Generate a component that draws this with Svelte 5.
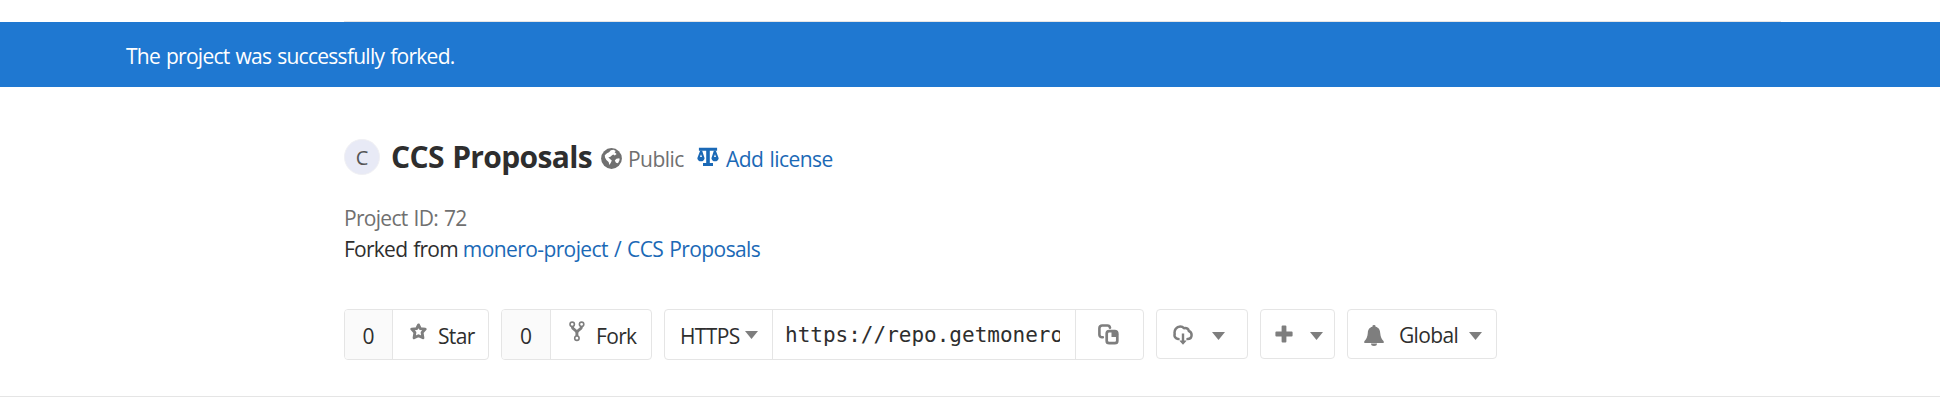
<script>
  const caret = "M0 0h12.6L6.3 7z";
</script>

{#snippet down()}
  <svg class="caret" width="13" height="8" viewBox="0 0 12.6 7" preserveAspectRatio="none"><path d={caret} /></svg>
{/snippet}

<div class="page">
  <div class="top"><div class="rule"></div></div>
  <div class="flash"><span class="t t-flash">The project was successfully forked.</span></div>
  <main>
    <div class="title">
      <div class="avatar">C</div>
      <h1 class="t">CCS Proposals</h1>
      <svg class="globe" width="21" height="21" viewBox="0 0 21 21"><circle cx="10.5" cy="10.5" r="10.4" /><path fill="#fff" d="M9.800 2.200 12.500 1.800 14.800 2.900 13.600 4.200 15.600 6 13.800 7.400 12.200 6.400 10.800 7.600 9 9 7.300 9.300 9 11 10.800 12.400 9.800 14.800 8.400 17 7.600 14 5.400 12 4 9.400 3.800 7.200 6 5.200 8 4.200zM15.400 10.800 18.400 10.200 18.600 12 17 15.200 15 14.800 13.800 12.600z" /></svg>
      <span class="t public">Public</span>
      <svg class="scale" width="22" height="20" viewBox="0 0 22 20"><path d="M1.900.8h18.200v3H12.800V16H16v2.900H6V16h3.200V3.800H1.900z" /><path d="M3.200 3.500h1.900L7.600 11.200a3.700 3.700 0 0 1-7.300 0zM16.900 3.500h1.900l2.900 7.700a3.700 3.700 0 0 1-7.300 0z" /><path fill="#fff" d="M4 7.300 5 10H3zM18 7.300l1 2.700h-2z" /></svg>
      <a class="t license" href="#license">Add license</a>
    </div>
    <div class="meta">
      <div><span class="t pid">Project ID: 72</span></div>
      <div><span class="t from">Forked from</span><a class="t source" href="#source">monero-project / CCS Proposals</a></div>
    </div>
    <div class="actions">
      <div class="box star">
        <span class="count">0</span>
        <span class="act"><svg width="17" height="17" viewBox="0 0 17 17"><path fill="none" stroke="#7e7e7e" stroke-width="2.9" stroke-linejoin="round" d="M8.500 1.900l1.800 3.700 4.900.5-3.100 3.400.8 5.300-4.400-2-4.400 2 .8-5.300-3.100-3.400 4.900-.5z" /></svg><span class="t">Star</span></span>
      </div>
      <div class="box fork">
        <span class="count">0</span>
        <span class="act"><svg width="16" height="21" viewBox="0 0 16 21"><g fill="none" stroke="#7e7e7e"><path stroke-width="2.9" d="M3.200 5.400c0 4 4.700 2.600 4.700 6.500V15M12.600 5.400c0 4-4.700 2.600-4.700 6.500" /><circle cx="3.2" cy="3.3" r="2.200" stroke-width="1.600" /><circle cx="12.600" cy="3.300" r="2.200" stroke-width="1.600" /><circle cx="7.900" cy="17.200" r="2.200" stroke-width="1.600" /></g></svg><span class="t">Fork</span></span>
      </div>
      <div class="box clone">
        <span class="proto"><span class="t">HTTPS</span>{@render down()}</span>
        <span class="url"><span class="clip">https://repo.getmonero</span></span>
        <span class="copy"><svg width="21" height="21" viewBox="0 0 21 21"><path fill="none" stroke="#7e7e7e" stroke-width="2.600" stroke-linecap="round" d="M4.800 13.300H4a2.600 2.600 0 0 1-2.600-2.600V4.200A2.700 2.700 0 0 1 4.100 1.500h5.100A2.700 2.700 0 0 1 12 3.800" /><rect x="8.700" y="7.200" width="10.600" height="12" rx="2.500" fill="none" stroke="#7e7e7e" stroke-width="2.700" /><path d="M13.500 7h3l3.500 3.400V13h-6.500z" /></svg></span>
      </div>
      <div class="box download"><svg width="20" height="20" viewBox="0 0 20 20"><path fill="none" stroke="#7e7e7e" stroke-width="2.500" stroke-linecap="round" stroke-linejoin="round" d="M5.500 14H5A3.800 3.800 0 0 1 1.700 9C.9 5 3.500 1.400 7.200 1.400c2 0 3 .8 3.800 1.800 3-.5 4.500.8 4.800 2.800 1.700.6 2.800 2 2.800 4 0 2.300-1.500 4-4.100 4" /><path d="M8.800 8.500h2.400v7h2.600L10 19.800l-3.800-4.300h2.600z" /></svg>{@render down()}</div>
      <div class="box plus"><svg width="18" height="18" viewBox="0 0 18 18"><path d="M7.600.4h2.800q1 0 1 1v5.200h5.200q1 0 1 1v2.800q0 1-1 1h-5.200v5.200q0 1-1 1H7.600q-1 0-1-1v-5.200H1.400q-1 0-1-1V7.600q0-1 1-1h5.200V1.400q0-1 1-1z" /></svg>{@render down()}</div>
      <div class="box global"><svg width="20" height="21" viewBox="0 0 20 21"><path d="M10 0a1.500 1.500 0 0 1 1.500 1.800C15 2.600 16 5 16.200 8c.3 4.300 1.600 6.300 3.500 8.200V18H.3v-1.800C2.200 14.300 3.500 12.300 3.800 8 4 5 5 2.600 8.500 1.800A1.500 1.500 0 0 1 10 0zM7 18.500h6a3 2.500 0 0 1-6 0z" /></svg><span class="t">Global</span>{@render down()}</div>
    </div>
  </main>
  <div class="bottom"></div>
</div>

<style>
  :global(body) { margin: 0; background: #fff; }
  .page { height: 400px; overflow: hidden; font: 21px/31px "Open Sans", "Noto Sans", sans-serif; color: #2e2e2e; display: flex; flex-direction: column; }
  .top { height: 22px; display: flex; align-items: flex-end; padding-left: 344px; }
  .rule { height: 1px; width: 1437px; background: #e5e5e5; }
  .flash { height: 65px; box-sizing: border-box; padding: 19px 0 0 126px; background: #1f78d1; color: #fff; line-height: 30px; }
  .t { white-space: nowrap; letter-spacing: -.65px; word-spacing: 1.2px; }
  .t-flash { letter-spacing: -.73px; }
  main { padding: 51px 0 0 344px; height: 309px; box-sizing: border-box; }
  .title { display: flex; height: 40px; }
  .avatar { width: 36px; height: 36px; margin-top: 1px; box-sizing: border-box; border: 1px solid #f0f0f4; border-radius: 50%; background: #e8eaf6; color: #555; font-size: 20px; line-height: 35px; text-align: center; }
  h1 { margin: 0 0 0 11px; width: 198px; font-size: 30px; line-height: 38px; font-weight: 700; letter-spacing: -1.4px; word-spacing: 2px; }
  svg { fill: #7e7e7e; flex: none; display: block; }
  .globe { margin: 10px 0 0 12px; fill: #707070; }
  .public { margin: 6px 0 0 6px; width: 57px; color: #707070; letter-spacing: -.55px; }
  .scale { margin: 9px 0 0 12px; fill: #1b69b6; }
  .license { margin: 6px 0 0 7px; letter-spacing: -.55px; }
  a { color: #1b69b6; text-decoration: none; }
  .meta { margin-top: 25px; }
  .pid { color: #707070; letter-spacing: -.7px; }
  .from { letter-spacing: -.75px; }
  .source { margin-left: 5px; letter-spacing: -.6px; }
  .actions { display: flex; align-items: flex-start; gap: 12px; margin-top: 44px; }
  .box { box-sizing: border-box; height: 50px; border: 1px solid #e5e5e5; border-radius: 4px; display: flex; align-items: center; overflow: hidden; }
  .star, .fork, .clone { height: 51px; }
  .star { width: 145px; }
  .fork { width: 151px; }
  .clone { width: 480px; }
  .count { width: 47px; height: 100%; background: #fafafa; border-right: 1px solid #e5e5e5; text-align: center; line-height: 53px; }
  .fork .count { width: 48px; }
  .act { display: flex; }
  .act svg { margin: 6px 11px 0 17px; }
  .fork .act svg { margin: 4px 11px 0 18px; }
  .act .t { margin-top: 4px; }
  .proto { width: 107px; height: 100%; border-right: 1px solid #e5e5e5; display: flex; }
  .proto .t { margin: 11px 0 0 15px; width: 61px; }
  .proto svg { margin: 21px 0 0 4px; }
  .url { width: 302px; height: 100%; border-right: 1px solid #e5e5e5; }
  .clip { display: block; overflow: hidden; margin: 10px 0 0 12px; width: 275px; font: 21px/31px "DejaVu Sans Mono", monospace; }
  .copy { padding-left: 22px; }
  .download { width: 92px; }
  .download > svg:first-child { margin: 2px 19px 0 16px; }
  .plus { width: 75px; }
  .plus > svg:first-child { margin: 0 17px 0 14px; }
  .global { width: 150px; }
  .global > svg:first-child { margin: 3px 15px 0 16px; }
  .global .t { width: 59px; margin: 3px 11px 0 0; }
  .download .caret, .plus .caret, .global .caret { margin-top: 3px; }
  .bottom { height: 1px; background: #e5e5e5; }
</style>
